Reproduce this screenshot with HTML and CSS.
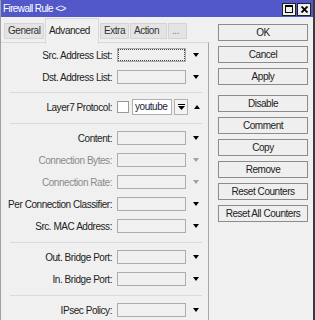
FILE: index.html
```html
<!DOCTYPE html>
<html lang="en">
<head>
    <meta charset="UTF-8">
    <title>Firewall Rule</title>
    <link rel="stylesheet" href="styles.css">
</head>
<body>

<div class="window">
    <div class="titlebar">
        <span class="title">Firewall Rule &lt;&gt;</span>
        <div class="title-buttons">
            <span class="tb-btn"><span class="max-icon"></span></span>
            <span class="tb-btn">
                <svg width="7" height="7" viewBox="0 0 7 7"><path d="M0.5 0.5 L6.5 6.5 M6.5 0.5 L0.5 6.5" stroke="#000" stroke-width="1.8"/></svg>
            </span>
        </div>
    </div>

    <div class="main">
        <div class="left">
            <!-- Tabs -->
            <div class="tabs">
                <span class="tab">General</span>
                <span class="tab active">Advanced</span>
                <span class="tab">Extra</span>
                <span class="tab">Action</span>
                <span class="tab">...</span>
            </div>

            <div class="panel">
                <div class="section first">
                    <div class="row">
                        <label>Src. Address List:</label>
                        <span class="box focused"></span>
                        <span class="arrow down"></span>
                    </div>
                    <div class="row">
                        <label>Dst. Address List:</label>
                        <span class="box"></span>
                        <span class="arrow down"></span>
                    </div>
                </div>

                <div class="section">
                    <div class="row">
                        <label>Layer7 Protocol:</label>
                        <span class="check"></span>
                        <span class="combo-text">youtube</span>
                        <span class="combo-btn">
                            <svg width="7" height="7" viewBox="0 0 7 7"><rect x="0" y="0" width="7" height="1" fill="#000"/><polygon points="0,2 7,2 3.5,6" fill="#000"/></svg>
                        </span>
                        <span class="arrow up"></span>
                    </div>
                </div>

                <div class="section">
                    <div class="row">
                        <label>Content:</label>
                        <span class="box"></span>
                        <span class="arrow down"></span>
                    </div>
                    <div class="row disabled">
                        <label>Connection Bytes:</label>
                        <span class="box"></span>
                        <span class="arrow down"></span>
                    </div>
                    <div class="row disabled">
                        <label>Connection Rate:</label>
                        <span class="box"></span>
                        <span class="arrow down"></span>
                    </div>
                    <div class="row">
                        <label>Per Connection Classifier:</label>
                        <span class="box"></span>
                        <span class="arrow down"></span>
                    </div>
                    <div class="row">
                        <label>Src. MAC Address:</label>
                        <span class="box"></span>
                        <span class="arrow down"></span>
                    </div>
                </div>

                <div class="section">
                    <div class="row">
                        <label>Out. Bridge Port:</label>
                        <span class="box"></span>
                        <span class="arrow down"></span>
                    </div>
                    <div class="row">
                        <label>In. Bridge Port:</label>
                        <span class="box"></span>
                        <span class="arrow down"></span>
                    </div>
                </div>

                <div class="section last">
                    <div class="row">
                        <label>IPsec Policy:</label>
                        <span class="box"></span>
                        <span class="arrow down"></span>
                    </div>
                </div>
            </div>
        </div>

        <!-- Action buttons -->
        <div class="buttons">
            <button>OK</button>
            <button>Cancel</button>
            <button>Apply</button>
            <button class="group-start">Disable</button>
            <button>Comment</button>
            <button>Copy</button>
            <button>Remove</button>
            <button>Reset Counters</button>
            <button>Reset All Counters</button>
        </div>
    </div>
</div>

</body>
</html>
```

FILE: styles.css
```css
body {
    margin: 0;
    font-family: "Liberation Sans", Arial, sans-serif;
    font-size: 10px;
    letter-spacing: -0.45px;
    color: #222;
}

.window {
    width: 315px;
    height: 320px;
    box-sizing: border-box;
    background-color: #f0f0f0;
    border-left: 1px solid #a0a0a0;
    border-right: 2px solid #3c3c3c;
    overflow: hidden;
}

.titlebar {
    height: 17px;
    background-color: #5358c9;
    display: flex;
    align-items: center;
    justify-content: space-between;
    padding: 0 2px 0 2px;
}

.title {
    color: #fff;
    letter-spacing: -0.6px;
}

.title-buttons {
    display: flex;
    gap: 1px;
    margin-top: 1px;
}

.tb-btn {
    width: 12px;
    height: 11px;
    border: 1px solid #222;
    background-color: #f0f0f0;
    display: flex;
    align-items: center;
    justify-content: center;
}

.max-icon {
    width: 6px;
    height: 5px;
    border: 1px solid #000;
    border-top-width: 2px;
}

.main {
    display: flex;
    height: 303px;
}

.left {
    width: 208px;
    display: flex;
    flex-direction: column;
}

.tabs {
    height: 25px;
    display: flex;
    align-items: flex-start;
    padding-left: 3px;
    gap: 1px;
}

.tab {
    margin-top: 6px;
    height: 14px;
    line-height: 14px;
    padding: 0 3px;
    background-color: #e4e4e4;
    border: 1px solid #d4d4d4;
    color: #333;
}

.tab:nth-child(1) { width: 32px; }
.tab:nth-child(3) { width: 21px; }
.tab:nth-child(4) { width: 29px; }
.tab:nth-child(5) { width: 11px; color: #777; }

.tab.active {
    margin-top: 1px;
    height: 25px;
    line-height: 23px;
    width: 46px;
    background-color: #f0f0f0;
    border: 1px solid #d8d8d8;
    border-bottom: none;
    color: #222;
    position: relative;
    z-index: 1;
}

.panel {
    flex: 1;
    border-top: 1px solid #d8d8d8;
    border-right: 1px solid #a8a8a8;
}

.section {
    padding: 3px 0 5px;
    border-bottom: 1px solid #dadada;
    margin: 0 6px 0 9px;
}

.section.first {
    padding-top: 1px;
    padding-bottom: 4px;
}

.section.last {
    border-bottom: none;
}

.row {
    height: 22px;
    display: flex;
    align-items: center;
    margin-left: -9px;
}

.row label {
    width: 111px;
    text-align: right;
    margin-right: 5px;
}

.box {
    width: 67px;
    height: 12px;
    border: 1px solid #acacac;
    background-color: #f0f0f0;
}

.box.focused {
    outline: 1px dotted #444;
    outline-offset: -2px;
}

.arrow {
    width: 0;
    height: 0;
    margin-left: 7px;
    border-left: 3.5px solid transparent;
    border-right: 3.5px solid transparent;
}

.arrow.down {
    border-top: 4px solid #000;
}

.arrow.up {
    margin-left: 6px;
    border-bottom: 4px solid #000;
}

.disabled label {
    color: #8a8a8a;
}

.disabled .arrow.down {
    border-top-color: #a0a0a0;
}

.check {
    width: 10px;
    height: 10px;
    border: 1px solid #9a9a9a;
    background-color: #fff;
    margin-right: 3px;
}

.combo-text {
    width: 36px;
    height: 14px;
    line-height: 14px;
    padding-left: 2px;
    border: 1px solid #b0b0b0;
    background-color: #fff;
    color: #1a2238;
}

.combo-btn {
    width: 12px;
    height: 14px;
    margin-left: 2px;
    border: 1px solid #b0b0b0;
    background-color: #f4f4f4;
    display: flex;
    align-items: center;
    justify-content: center;
}

.buttons {
    flex: 1;
    display: flex;
    flex-direction: column;
    padding: 7px 0 0 9px;
    gap: 5px;
}

.buttons button {
    width: 90px;
    height: 17px;
    padding: 0;
    font-family: inherit;
    font-size: 10px;
    letter-spacing: -0.45px;
    color: #222;
    background-color: #efefef;
    border: 1px solid #8c8c8c;
    border-radius: 0;
}

.buttons .group-start {
    margin-top: 5px;
}
```
